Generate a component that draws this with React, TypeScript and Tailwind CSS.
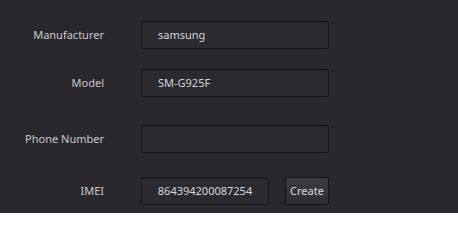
const font = { fontFamily: '"Noto Sans", "DejaVu Sans", sans-serif' }

function Label({ children }: { children: React.ReactNode }) {
  return <div className="w-[104px] shrink-0 text-right text-[11px] text-[#c9c9cb]">{children}</div>
}

function Field({ value, width = 'w-[188px]', center = false }: { value: string; width?: string; center?: boolean }) {
  return (
    <div
      className={`${width} h-[28px] flex items-center rounded-[2px] border border-[#17161a] bg-[#2b2a2f] text-[11px] text-[#d6d6d8] shadow-[inset_0_1px_0_rgba(0,0,0,0.25)] ${center ? 'justify-center' : 'pl-[16px]'}`}
    >
      {value}
    </div>
  )
}

export default function App() {
  return (
    <div className="w-[458px] h-[213px] bg-[#29282d] overflow-hidden" style={font}>
      <div className="flex flex-col pt-[21px]">
        <div className="flex items-center gap-[37px]">
          <Label>Manufacturer</Label>
          <Field value="samsung" />
        </div>
        <div className="flex items-center gap-[37px] mt-[20px]">
          <Label>Model</Label>
          <Field value="SM-G925F" />
        </div>
        <div className="flex items-center gap-[37px] mt-[28px]">
          <Label>Phone Number</Label>
          <Field value="" />
        </div>
        <div className="flex items-center gap-[37px] mt-[24px]">
          <Label>IMEI</Label>
          <div className="flex items-center gap-[16px]">
            <Field value="864394200087254" width="w-[128px]" center />
            <button className="w-[44px] h-[28px] rounded-[2px] border border-[#141317] bg-gradient-to-b from-[#3c3b40] to-[#2e2d32] text-[11px] text-[#d8d8da]">
              Create
            </button>
          </div>
        </div>
      </div>
    </div>
  )
}
